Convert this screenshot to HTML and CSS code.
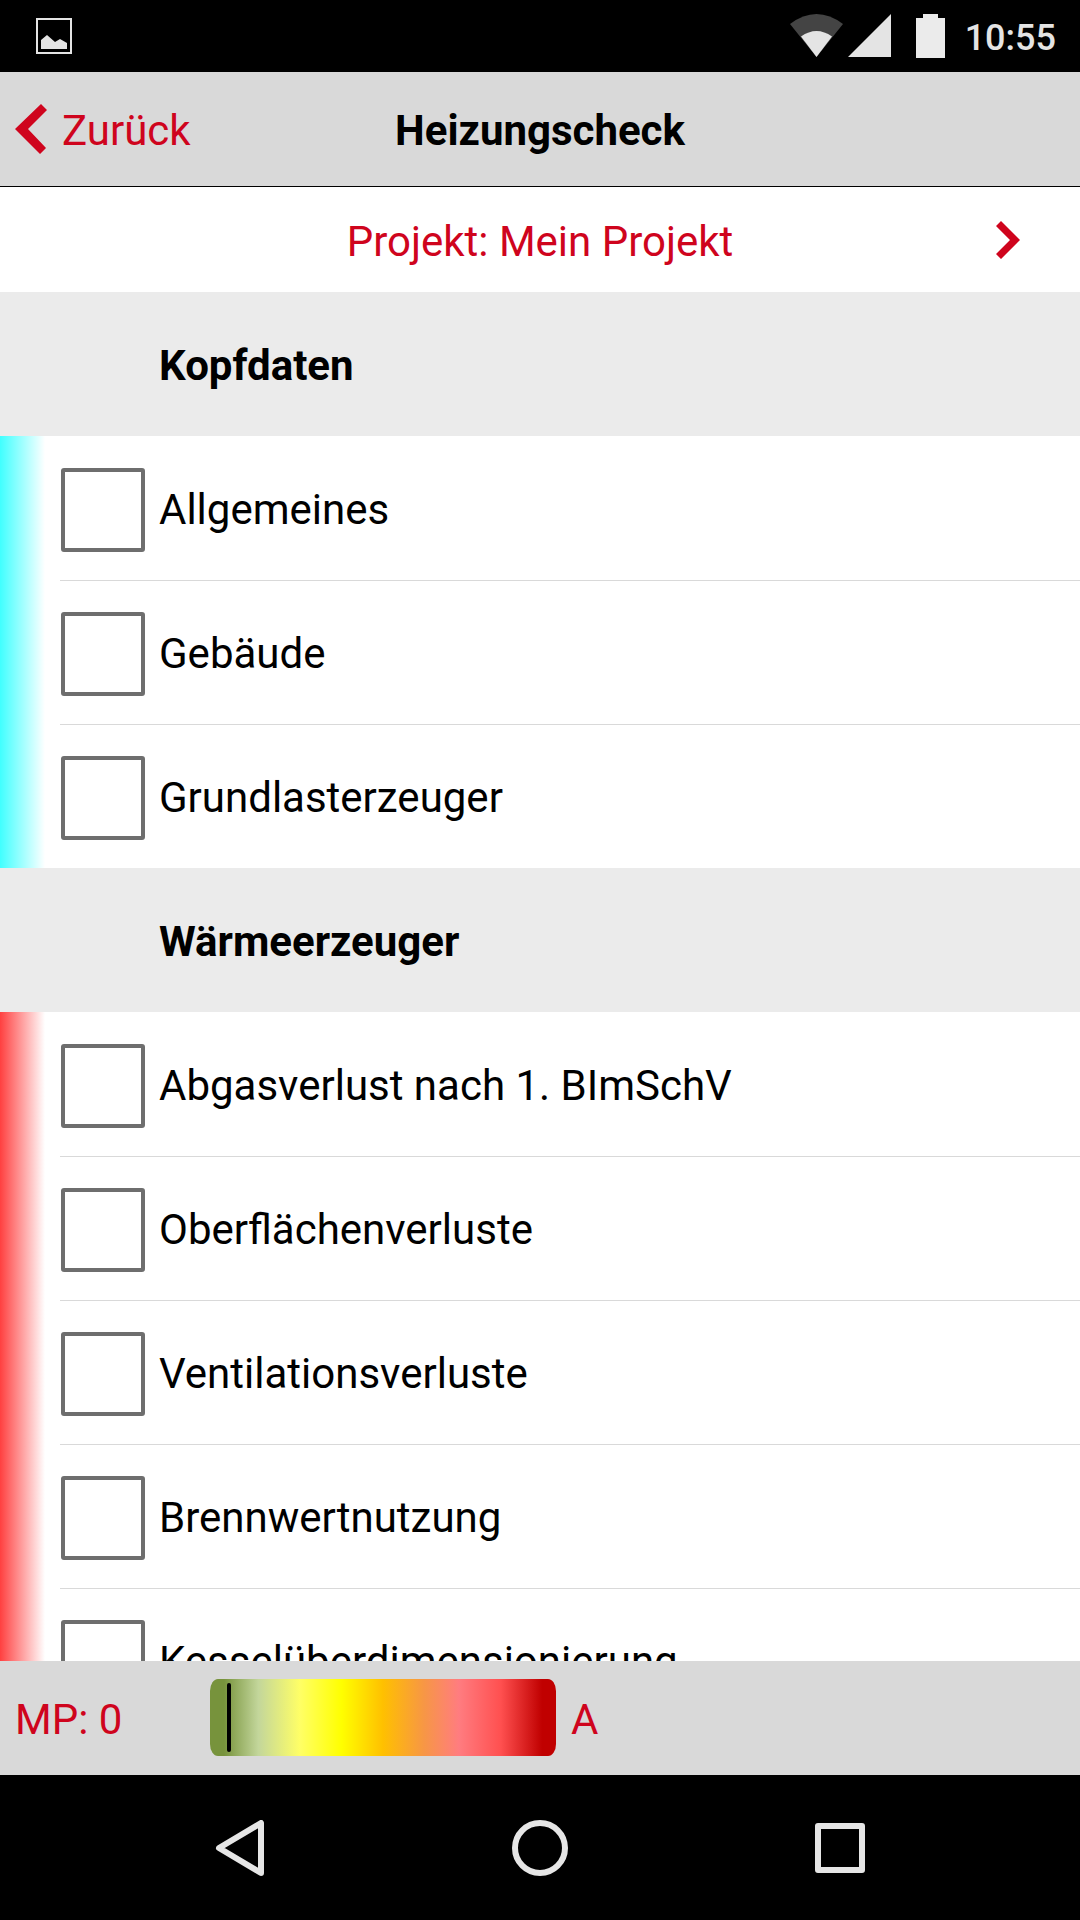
FILE: index.html
```
<!DOCTYPE html>
<html lang="de">
<head>
  <meta charset="UTF-8" />
  <title>Heizungscheck</title>
  <meta name="viewport" content="width=device-width, initial-scale=1.0" />
  <link rel="stylesheet" href="styles.css">
</head>
<body>
  <div class="status-bar">
    <svg class="status-picture" width="36" height="36" viewBox="0 0 36 36">
      <rect x="1" y="1" width="34" height="34" fill="none" stroke="#e4e4e4" stroke-width="2" />
      <path d="M5 31V22L11 17L19 24L24 21L31 25V31Z" fill="#e4e4e4" />
    </svg>
    <div class="status-icons">
      <svg width="102" height="44" viewBox="0 0 102 44">
        <path d="M0 10Q26.500 -10 53 10L26.500 43Z" fill="#444" />
        <path d="M11 22.500Q26.500 11.500 42 22.500L26.500 43Z" fill="#e4e4e4" />
        <path d="M58 43L101 0V43Z" fill="#e4e4e4" />
      </svg>
      <svg class="status-battery" width="29" height="44" viewBox="0 0 29 44">
        <path d="M7 0H22V4H29V44H0V4H7Z" fill="#ebebeb" />
      </svg>
      <span class="clock">10:55</span>
    </div>
  </div>

  <header>
    <a href="#" class="back">
      <svg width="32" height="50" viewBox="0 0 32 50">
        <path d="M0 25L26 0L32 6L13 25L31 44L25 50Z" fill="#cf041d" />
      </svg>
      <span>Zurück</span>
    </a>
    <h1>Heizungscheck</h1>
  </header>

  <a href="#" class="project">
    <span>Projekt: Mein Projekt</span>
    <svg width="24" height="38" viewBox="0 0 24 38">
      <path d="M5 0L24 19L5 38L0 33L14 19L0 5Z" fill="#cf041d" />
    </svg>
  </a>

  <main>
    <h2>Kopfdaten</h2>
    <ul class="checks cyan">
      <li><label><input type="checkbox">Allgemeines</label></li>
      <li><label><input type="checkbox">Gebäude</label></li>
      <li><label><input type="checkbox">Grundlasterzeuger</label></li>
    </ul>
    <h2>Wärmeerzeuger</h2>
    <ul class="checks red">
      <li><label><input type="checkbox">Abgasverlust nach 1. BImSchV</label></li>
      <li><label><input type="checkbox">Oberflächenverluste</label></li>
      <li><label><input type="checkbox">Ventilationsverluste</label></li>
      <li><label><input type="checkbox">Brennwertnutzung</label></li>
      <li><label><input type="checkbox">Kesselüberdimensionierung</label></li>
    </ul>
  </main>

  <footer>
    <span class="points">MP: 0</span>
    <div class="scale"><div class="marker"></div></div>
    <span class="grade">A</span>
  </footer>

  <nav>
    <button type="button" aria-label="Zurück">
      <svg width="56" height="56" viewBox="0 0 56 56">
        <path d="M49 3V53L7 28Z" />
      </svg>
    </button>
    <button type="button" aria-label="Startseite">
      <svg width="56" height="56" viewBox="0 0 56 56">
        <circle cx="28" cy="28" r="25" />
      </svg>
    </button>
    <button type="button" aria-label="Übersicht">
      <svg width="56" height="56" viewBox="0 0 56 56">
        <rect x="6" y="6" width="44" height="44" />
      </svg>
    </button>
  </nav>
</body>
</html>
```
FILE: styles.css
```
* {
  box-sizing: border-box;
}

body {
  margin: 0;
  height: 100vh;
  display: flex;
  flex-direction: column;
  background-color: #fff;
  font-family: Roboto, sans-serif;
  font-size: 42px;
  line-height: 50px;
  color: #000;
}

svg {
  display: block;
  flex: none;
}

a {
  color: #cf041d;
  text-decoration: none;
}

h1, h2 {
  margin: 0;
  font-size: 42px;
  font-weight: bold;
}

.status-bar {
  flex: none;
  height: 72px;
  padding: 0 24px 0 36px;
  display: flex;
  justify-content: space-between;
  align-items: center;
  background-color: #000;
}

.status-icons {
  display: flex;
  align-items: center;
  gap: 20px;
}

.status-battery {
  margin-left: 4px;
}

.clock {
  padding-top: 3px;
  font-size: 36px;
  font-weight: 500;
  color: #e4e4e4;
}

header {
  flex: none;
  height: 115px;
  padding: 0 15px;
  display: grid;
  grid-template-columns: 1fr auto 1fr;
  align-items: center;
  background-color: #d9d9d9;
  border-bottom: 1px solid #000;
}

header h1 {
  padding-top: 4px;
}

.back {
  display: flex;
  align-items: center;
  gap: 15px;
}

.back span {
  padding-top: 4px;
}

.project {
  flex: none;
  height: 105px;
  padding: 0 60px;
  display: grid;
  grid-template-columns: 1fr auto 1fr;
  align-items: center;
}

.project span {
  grid-column: 2;
  padding-top: 4px;
}

.project svg {
  justify-self: end;
}

main {
  flex: 1;
  min-height: 0;
  overflow-y: auto;
  scrollbar-width: none;
}

h2 {
  height: 144px;
  padding: 4px 0 0 159px;
  display: flex;
  align-items: center;
  background-color: #ebebeb;
}

.checks {
  margin: 0;
  padding: 0 0 0 60px;
  list-style: none;
  background-repeat: no-repeat;
  background-size: 45px 100%;
}

.checks.cyan {
  background-image: linear-gradient(to right, #40ffff, #fff);
}

.checks.red {
  background-image: linear-gradient(to right, #ff4040, #fff);
}

.checks li {
  height: 144px;
  border-top: 1px solid #d9d9d9;
}

.checks li:first-child {
  border-top-color: transparent;
}

.checks label {
  height: 100%;
  padding: 3px 0 0 1px;
  display: flex;
  align-items: center;
  gap: 14px;
}

.checks input {
  appearance: none;
  flex: none;
  width: 84px;
  height: 84px;
  margin: 0;
  background-color: #fff;
  border: 4px solid #6e6e6e;
  border-radius: 3px;
}

.checks input:checked {
  background-color: #6e6e6e;
  box-shadow: inset 0 0 0 12px #fff;
}

footer {
  flex: none;
  height: 115px;
  padding: 0 15px;
  display: flex;
  align-items: center;
  background-color: #d9d9d9;
  border-bottom: 1px solid #000;
  color: #cf041d;
}

.points {
  width: 195px;
  padding-top: 4px;
}

.scale {
  position: relative;
  width: 346px;
  height: 77px;
  margin-bottom: 1px;
  border-radius: 8px / 12px;
  background: linear-gradient(to right, #77933c 4%, #c3d69b 14%, #ffff66 26%, #ffff00 38%, #ffc000 50%, #f79646 62%, #ff7c80 72%, #ff5050 84%, #c00000 96%);
}

.marker {
  position: absolute;
  top: 4px;
  bottom: 4px;
  left: 5%;
  width: 4px;
  border-radius: 2px;
  background-color: #000;
}

.grade {
  padding: 4px 0 0 15px;
}

nav {
  flex: none;
  height: 144px;
  padding: 0 90px;
  display: grid;
  grid-template-columns: 1fr 1fr 1fr;
  background-color: #000;
}

nav button {
  padding: 0;
  display: flex;
  justify-content: center;
  align-items: center;
  background: none;
  border: none;
  cursor: pointer;
}

nav svg {
  fill: none;
  stroke: #e6e6e6;
  stroke-width: 6px;
  stroke-linejoin: round;
}
```
